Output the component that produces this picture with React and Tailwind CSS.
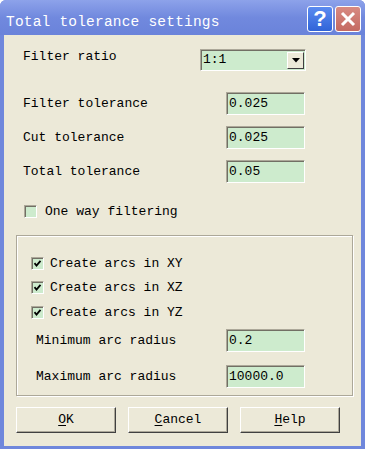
import React from 'react';

const mono = { fontFamily: '"Liberation Mono", "DejaVu Sans Mono", monospace' };

function Field({ value }) {
  return (
    <div className="w-[79px] h-[23px] bg-[#cdebcd] border-t border-l border-[#aca899] border-b border-r border-b-white border-r-white shadow-[inset_1px_1px_0_#716f64] flex items-center pl-[2px] text-[13px] text-black">
      {value}
    </div>
  );
}

function Check({ checked }) {
  return (
    <div className="w-[13px] h-[13px] bg-[#cdebcd] border-t border-l border-[#aca899] border-b border-r border-b-white border-r-white shadow-[inset_1px_1px_0_#716f64] flex items-center justify-center">
      {checked && (
        <svg width="9" height="9" viewBox="0 0 9 9">
          <path d="M1.5 4.2 L3.5 6.5 L7.5 1.8" fill="none" stroke="#000" strokeWidth="1.8" />
        </svg>
      )}
    </div>
  );
}

function Btn({ first, rest }) {
  return (
    <div className="w-[100px] h-[26px] bg-[#ece9d8] border-t border-l border-white border-b border-r border-b-[#404040] border-r-[#404040] shadow-[inset_-1px_-1px_0_#aca899] flex items-center justify-center text-[13px] text-black">
      <span className="underline underline-offset-2">{first}</span>
      <span>{rest}</span>
    </div>
  );
}

function Row({ label, value, labelW = 203, mt }) {
  return (
    <div className={`flex items-center h-[23px] ${mt}`}>
      <div style={{ width: labelW }}>{label}</div>
      <Field value={value} />
    </div>
  );
}

export default function App() {
  return (
    <div className="w-[366px] h-[450px] bg-white" style={mono}>
      <div className="w-[365px] h-[449px] bg-[#6f87dc] rounded-t-[6px] flex flex-col">
        {/* title bar */}
        <div className="h-[35px] flex items-start pt-[6px] pl-[6px] pr-[4px] bg-gradient-to-b from-[#8da2ea] via-[#7189de] to-[#6a83da] rounded-t-[6px]">
          <span className="text-white text-[14.5px] leading-[22px] mt-[5px] flex-1 tracking-[0.2px]">Total tolerance settings</span>
          <div className="w-[26px] h-[26px] rounded-[3px] border border-white bg-gradient-to-b from-[#5b8bf0] to-[#3064d8] flex items-center justify-center">
            <span className="text-white text-[22px] font-bold leading-none" style={{ fontFamily: '"Liberation Sans", Arial, sans-serif' }}>?</span>
          </div>
          <div className="w-[26px] h-[26px] ml-[2px] rounded-[3px] border border-white bg-gradient-to-b from-[#d88a82] to-[#c46a62] flex items-center justify-center">
            <svg width="16" height="16" viewBox="0 0 16 16">
              <path d="M2 2 L14 14 M14 2 L2 14" stroke="#fff" strokeWidth="3" />
            </svg>
          </div>
        </div>
        {/* body */}
        <div className="mx-[4px] w-[357px] h-[411px] bg-[#ece9d8] pl-[19px] pt-[14px] text-[13px] text-black flex flex-col">
          <div className="flex items-start h-[22px]">
            <div className="w-[177px] leading-[16px]">Filter ratio</div>
            <div className="w-[106px] h-[22px] bg-[#cdebcd] border-t border-l border-[#aca899] border-b border-r border-b-white border-r-white shadow-[inset_1px_1px_0_#716f64] flex items-center pl-[2px]">
              <span className="flex-1">1:1</span>
              <div className="w-[17px] h-[17px] mr-[1px] bg-[#ece9d8] border-t border-l border-white border-b border-r border-b-[#404040] border-r-[#404040] flex items-center justify-center">
                <svg width="8" height="5" viewBox="0 0 8 5">
                  <path d="M0 0 H8 L4 4.5 Z" fill="#000" />
                </svg>
              </div>
            </div>
          </div>
          <Row label="Filter tolerance" value="0.025" mt="mt-[21px]" />
          <Row label="Cut tolerance" value="0.025" mt="mt-[11px]" />
          <Row label="Total tolerance" value="0.05" mt="mt-[11px]" />
          <div className="flex items-center h-[13px] mt-[22px] pl-[1px]">
            <Check />
            <span className="ml-[8px]">One way filtering</span>
          </div>
          {/* group */}
          <div className="mt-[17px] -ml-[7px] w-[337px] h-[161px] border border-[#aca899] shadow-[1px_1px_0_#fff,inset_1px_1px_0_#fff] pt-[21px] pl-[14px] flex flex-col">
            <div className="flex items-center h-[13px]">
              <Check checked />
              <span className="ml-[6px]">Create arcs in XY</span>
            </div>
            <div className="flex items-center h-[13px] mt-[11px]">
              <Check checked />
              <span className="ml-[6px]">Create arcs in XZ</span>
            </div>
            <div className="flex items-center h-[13px] mt-[12px]">
              <Check checked />
              <span className="ml-[6px]">Create arcs in YZ</span>
            </div>
            <div className="pl-[5px]">
              <Row label="Minimum arc radius" value="0.2" labelW={190} mt="mt-[10px]" />
              <Row label="Maximum arc radius" value="10000.0" labelW={190} mt="mt-[13px]" />
            </div>
          </div>
          <div className="flex gap-[12px] mt-[11px] -ml-[7px]">
            <Btn first="O" rest="K" />
            <Btn first="C" rest="ancel" />
            <Btn first="H" rest="elp" />
          </div>
        </div>
      </div>
    </div>
  );
}
